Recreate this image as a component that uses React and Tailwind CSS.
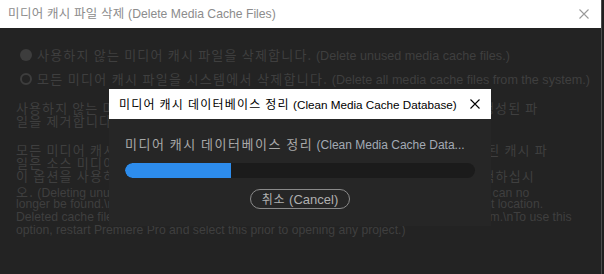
import React from 'react';

const ko = '"Noto Sans CJK KR", sans-serif';
const mixed = '"Liberation Sans", "Noto Sans CJK KR", sans-serif';

function CloseIcon({ className }) {
    return (
        <svg viewBox="0 0 10 10" className={className} fill="none" stroke="currentColor" strokeWidth="1.1">
            <path d="M0.5 0.5 L9.5 9.5 M9.5 0.5 L0.5 9.5" />
        </svg>
    );
}

// korean text in the dim background dialog is spaced out a bit
function Ko({ children, className = 'tracking-[1.2px]' }) {
    return <span style={{ fontFamily: ko }} className={className}>{children}</span>;
}

function Line({ children, className = '' }) {
    return <div className={`h-[13px] leading-[13px] whitespace-nowrap ${className}`}>{children}</div>;
}

export default function App() {
    return (
        <div className="relative w-[604px] h-[274px] bg-[#1f1f1f] overflow-hidden" style={{ fontFamily: mixed }}>
            {/* background dialog */}
            <div className="w-[602px] h-full bg-[#232323] border-r border-[#4c4c4c] flex flex-col">
                <div className="h-[28px] bg-white flex items-center justify-between pl-[8px] pr-[12px] shrink-0">
                    <span className="text-[12.2px] text-[#8c8c8c] whitespace-nowrap">
                        <Ko className="text-[12.5px] tracking-[0.4px]">미디어 캐시 파일 삭제</Ko> (Delete Media Cache Files)
                    </span>
                    <CloseIcon className="w-[10px] h-[10px] text-[#9a9a9a]" />
                </div>

                <div className="pt-[15px] text-[12.6px] text-[#3f3f3f]">
                    <div className="h-[24px] flex items-center pl-[20px] gap-[5px] whitespace-nowrap">
                        <span className="w-[12px] h-[12px] rounded-full bg-[#3d3d3d]" />
                        <span><Ko className="text-[13px] tracking-[1.2px]">사용하지 않는 미디어 캐시 파일을 삭제합니다.</Ko> (Delete unused media cache files.)</span>
                    </div>
                    <div className="h-[24px] flex items-center pl-[20px] gap-[5px] whitespace-nowrap">
                        <span className="w-[12px] h-[12px] rounded-full border-2 border-[#3d3d3d]" />
                        <span><Ko className="text-[13px] tracking-[1.3px]">모든 미디어 캐시 파일을 시스템에서 삭제합니다.</Ko> (Delete all media cache files from the system.)</span>
                    </div>

                    <div className="pl-[16px] mt-[10px] text-[13px]">
                        <Line><Ko className="tracking-[1.1px]">사용하지 않는 미디어 캐시 파일을 지우면 찾을 수 없는 소스 미디어를 기반으로 생성된 파</Ko></Line>
                        <Line><Ko>일을 제거합니다.</Ko></Line>
                    </div>

                    <div className="pl-[16px] mt-[16px] text-[12.2px]">
                        <Line className="text-[13px]"><Ko>모든 미디어 캐시 파일을 삭제하면 사용 중이 아닌 파일이 모두 삭제됩니다. 삭제된 캐시 파</Ko></Line>
                        <Line className="text-[13px]"><Ko>일은 소스 미디어를 다시 열 때 재생성됩니다.</Ko></Line>
                        <Line className="text-[13px]"><Ko>이 옵션을 사용하려면 프로젝트를 열기 전에 프로그램을 재시작 후 이 옵션을 선택하십시</Ko></Line>
                        <Line className="mt-[3px]"><Ko className="text-[13px] tracking-[1.2px]">오.</Ko> (Deleting unused media cache files removes files associated with source media that can no</Line>
                        <Line>longer be found.\nDeleting all media cache files will remove unused files from the current location.</Line>
                        <Line>Deleted cache files are regenerated when the source media is re-opened from the system.\nTo use this</Line>
                        <Line>option, restart Premiere Pro and select this prior to opening any project.)</Line>
                    </div>
                </div>
            </div>

            {/* progress modal */}
            <div className="absolute left-[109px] top-[89px] w-[382px] h-[137px] bg-[#262626] flex flex-col">
                <div className="h-[30px] bg-white flex items-center justify-between pl-[10px] pr-[11px] shrink-0">
                    <span className="text-[11.7px] text-black whitespace-nowrap">
                        <Ko className="text-[12px] tracking-[1.2px]">미디어 캐시 데이터베이스 정리</Ko> (Clean Media Cache Database)
                    </span>
                    <CloseIcon className="w-[10px] h-[10px] text-black" />
                </div>
                <div className="px-[16px] pt-[17px]">
                    <div className="h-[16px] leading-[16px] text-[12px] whitespace-nowrap">
                        <Ko className="text-[#a8a8a8] text-[13px] tracking-[1.5px]">미디어 캐시 데이터베이스 정리</Ko>
                        <span className="text-[#a3aab5]"> (Clean Media Cache Data...</span>
                    </div>
                    <div className="mt-[11px] h-[15px] rounded-full bg-[#1b1b1b] overflow-hidden">
                        <div className="h-full bg-[#2d8cec] rounded-l-full" style={{ width: '30.3%' }} />
                    </div>
                    <div className="flex justify-center mt-[11px]">
                        <button className="w-[100px] h-[20px] rounded-full border-[1.5px] border-[#8a8a8a] text-[13px] text-[#b0b0b0] leading-none flex items-center justify-center">
                            <Ko className="text-[12px] tracking-[0.8px]">취소</Ko>&nbsp;(Cancel)
                        </button>
                    </div>
                </div>
            </div>
        </div>
    );
}
